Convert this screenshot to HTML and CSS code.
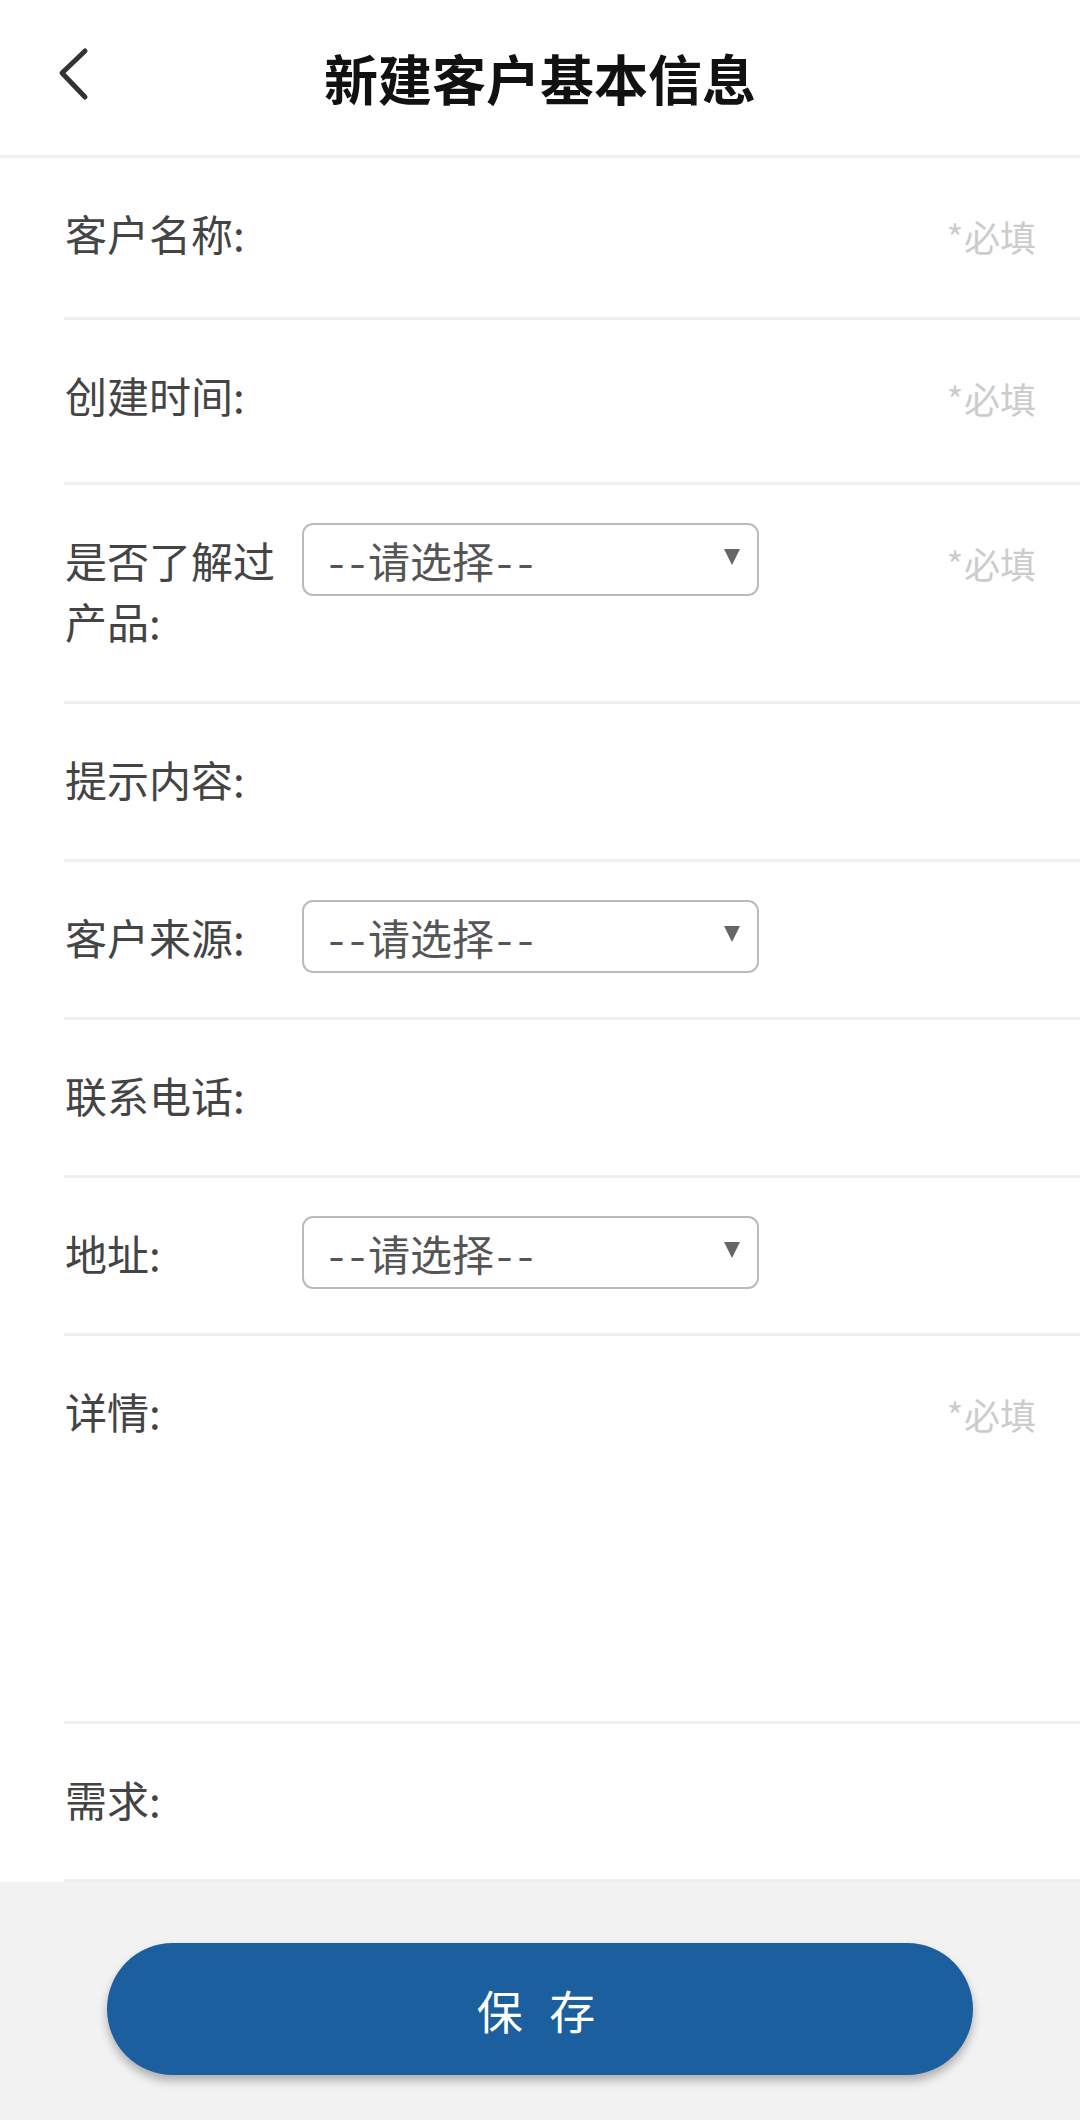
FILE: index.html
```html
<!DOCTYPE html>
<html lang="zh-CN">
<head>
<meta charset="UTF-8">
<meta name="viewport" content="width=device-width, initial-scale=1.0">
<title>新建客户基本信息</title>
<link rel="stylesheet" href="styles.css">
</head>
<body>
    <div class="page">
        <!-- 상단 헤더 -->
        <div class="header">
            <a class="back" href="#">
                <svg width="40" height="60" viewBox="0 0 40 60">
                    <path d="M31 7 L8 29 L31 53" fill="none" stroke="#333" stroke-width="5" stroke-linecap="round" stroke-linejoin="round"/>
                </svg>
            </a>
            <h1 class="title">新建客户基本信息</h1>
            <span></span>
        </div>

        <div class="form">
            <div class="row">
                <span class="label">客户名称:</span>
                <span class="must">*必填</span>
            </div>
            <div class="row row-time">
                <span class="label">创建时间:</span>
                <span class="must">*必填</span>
            </div>
            <div class="row">
                <span class="label">是否了解过产品:</span>
                <div class="select">
                    <span>--请选择--</span>
                    <svg class="arrow" width="18" height="18" viewBox="0 0 18 18"><path d="M1 1 H17 L9 17 Z" fill="#666"/></svg>
                </div>
                <span class="must">*必填</span>
            </div>
            <div class="row">
                <span class="label">提示内容:</span>
            </div>
            <div class="row">
                <span class="label">客户来源:</span>
                <div class="select">
                    <span>--请选择--</span>
                    <svg class="arrow" width="18" height="18" viewBox="0 0 18 18"><path d="M1 1 H17 L9 17 Z" fill="#666"/></svg>
                </div>
            </div>
            <div class="row">
                <span class="label">联系电话:</span>
            </div>
            <div class="row">
                <span class="label">地址:</span>
                <div class="select">
                    <span>--请选择--</span>
                    <svg class="arrow" width="18" height="18" viewBox="0 0 18 18"><path d="M1 1 H17 L9 17 Z" fill="#666"/></svg>
                </div>
            </div>
            <div class="row row-detail">
                <span class="label">详情:</span>
                <span class="must">*必填</span>
            </div>
            <div class="row">
                <span class="label">需求:</span>
            </div>
        </div>

        <div class="footer">
            <a class="save" href="#">保 存</a>
        </div>
    </div>
</body>
</html>
```

FILE: styles.css
```css
body{
    margin: 0;
    background: #f2f2f2;
    font-family: "Noto Sans CJK SC", "Noto Sans", sans-serif;
}
.page{
    width: 1080px;
}
/* 헤더 */
.header{
    height: 155px;
    background: #fff;
    border-bottom: 3px solid #eeeeee;
    display: grid;
    grid-template-columns: 1fr auto 1fr;
    align-items: center;
}
.back{
    display: flex;
    padding-left: 54px;
    margin-top: -8px;
}
.title{
    margin: 0;
    font-size: 54px;
    font-weight: bold;
    color: #111;
    line-height: 1;
}
/* 입력 목록 */
.form{
    background: #fff;
}
.row{
    display: flex;
    align-items: flex-start;
    margin-left: 64px;
    padding: 44px 44px 50px 0;
    border-bottom: 3px solid #eeeeee;
    font-size: 42px;
    line-height: 61px;
    color: #444;
}
.row-time{
    padding-bottom: 53px;
}
.row-detail{
    min-height: 291px;
}
.label{
    width: 238px;
    flex-shrink: 0;
    padding-left: 1px;
    box-sizing: border-box;
    padding-right: 16px;
}
.must{
    margin-left: auto;
    margin-top: 4px;
    font-size: 36px;
    color: #cccccc;
    font-feature-settings: "hwid";
}
.select{
    width: 457px;
    height: 73px;
    box-sizing: border-box;
    margin: -6px 0;
    border: 2px solid #bbbbbb;
    border-radius: 11px;
    display: flex;
    align-items: center;
    justify-content: space-between;
    padding: 0 16px 0 22px;
    color: #555;
    font-size: 42px;
    font-feature-settings: "hwid";
}
.arrow{
    margin-top: -6px;
}
/* 저장 버튼 */
.footer{
    padding: 61px 107px 40px;
}
.save{
    display: block;
    height: 132px;
    border-radius: 66px;
    background: #1b5f9e;
    box-shadow: 0 6px 10px rgba(0, 0, 0, 0.28);
    color: #fff;
    text-align: center;
    line-height: 132px;
    font-size: 46px;
    letter-spacing: 8px;
    text-decoration: none;
}
```
